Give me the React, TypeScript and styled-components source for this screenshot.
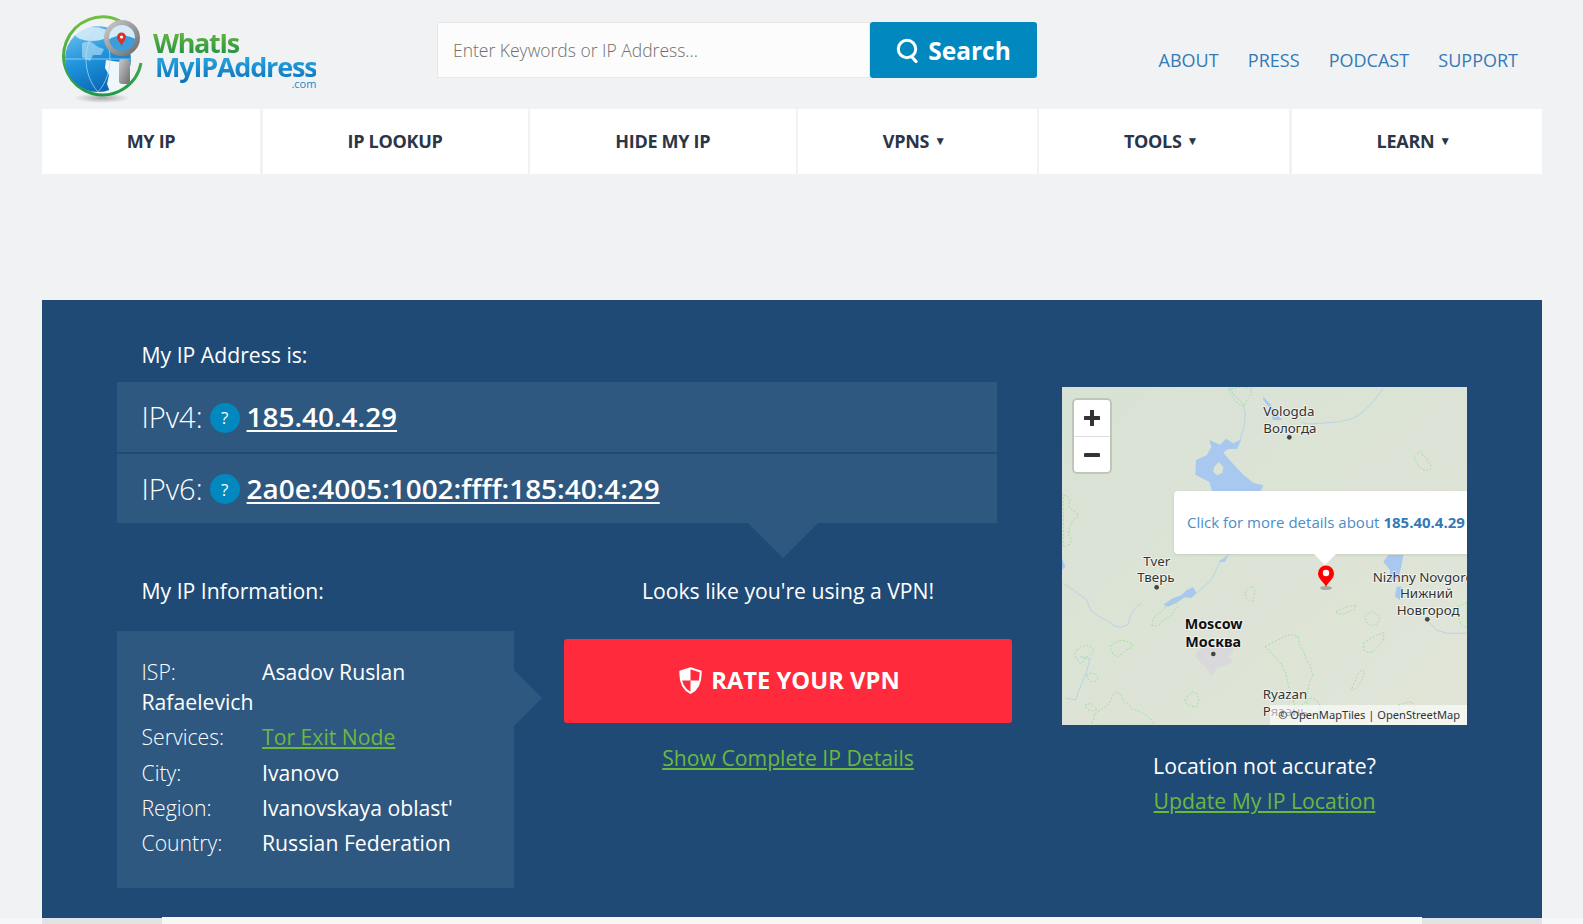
import styled, { createGlobalStyle } from "styled-components";

const GlobalStyle = createGlobalStyle`
  html, body {
    margin: 0;
    padding: 0;
    background: #f6f7f8;
    font-family: "Open Sans", "Noto Sans", sans-serif;
    overflow: hidden;
  }
  * { box-sizing: border-box; }
`;

const Page = styled.div`
  width: 1583px;
  height: 924px;
  overflow: hidden;
`;

const TopArea = styled.div`
  background: #f1f2f4;
  padding: 0 41px 0 42px;
`;

const Header = styled.header`
  display: flex;
  align-items: flex-start;
  height: 109px;
`;

const Logo = styled.a`
  display: flex;
  align-items: flex-start;
  width: 395px;
  padding-left: 16px;
  padding-top: 13px;
  text-decoration: none;
`;

const LogoText = styled.div`
  margin-left: -1px;
  padding-top: 17px;
  font-family: "Open Sans", sans-serif;
  font-weight: 700;
  display: flex;
  flex-direction: column;
`;

const LogoGreen = styled.span`
  margin-left: -2px;
  font-size: 27px;
  line-height: 26px;
  letter-spacing: -1.4px;
  background: linear-gradient(#6fb83f, #1f9145);
  -webkit-background-clip: text;
  background-clip: text;
  color: transparent;
`;

const LogoBlue = styled.span`
  font-size: 27px;
  line-height: 22px;
  letter-spacing: -1.2px;
  padding-bottom: 7px;
  margin-bottom: -6px;
  background: linear-gradient(#27a6e1, #0a6db6);
  -webkit-background-clip: text;
  background-clip: text;
  color: transparent;
`;

const LogoCom = styled.span`
  align-self: flex-end;
  font-size: 11px;
  font-weight: 400;
  line-height: 9px;
  color: #1784c8;
`;

const SearchForm = styled.form`
  display: flex;
  width: 600px;
  height: 56px;
  margin-top: 22px;
`;

const SearchInput = styled.input`
  flex: 1;
  min-width: 0;
  border: 1px solid #e8e8e8;
  background: #fcfcfc;
  padding: 0 15px;
  font-family: inherit;
  font-size: 17.5px;
  font-weight: 300;
  outline: none;
  &::placeholder {
    color: #6f6f6f;
    opacity: 1;
  }
`;

const SearchButton = styled.button`
  display: flex;
  align-items: center;
  justify-content: center;
  gap: 9px;
  width: 167px;
  border: 0;
  border-radius: 3px;
  background: #0088bf;
  color: #fff;
  font-family: inherit;
  font-size: 24.5px;
  font-weight: 700;
`;

const TopLinks = styled.nav`
  flex: 1;
  display: flex;
  justify-content: flex-end;
  gap: 29.2px;
  padding: 47px 24px 0 0;
`;

const TopLink = styled.a`
  font-size: 18px;
  line-height: 26px;
  color: #337ab7;
  text-decoration: none;
`;

const MainNav = styled.nav`
  display: flex;
  gap: 2.5px;
  height: 65px;
`;

const NavItem = styled.a<{ $w: number; $menu: boolean }>`
  flex: 0 0 ${(p) => p.$w}px;
  display: flex;
  align-items: center;
  justify-content: center;
  gap: 5px;
  padding: 0 ${(p) => (p.$menu ? 6 : 0)}px 2px 0;
  background: #fff;
  color: #2a3547;
  font-size: 18px;
  font-weight: 700;
  letter-spacing: -0.3px;
  text-decoration: none;
`;

const Caret = styled.span`
  font-size: 12px;
  line-height: 1;
`;

const AdSlot = styled.div`
  height: 126px;
`;

const Hero = styled.section`
  display: flex;
  gap: 50px;
  padding: 40px 75px 30px;
  background: #1f4a75;
  color: #fff;
`;

const LeftColumn = styled.div`
  width: 895px;
`;

const Heading = styled.h2`
  margin: 0;
  padding-left: 24.5px;
  font-size: 21.2px;
  font-weight: 400;
  line-height: 30px;
`;

const IpList = styled.div`
  position: relative;
  width: 880px;
  margin-top: 12px;
  display: flex;
  flex-direction: column;
  gap: 2px;

  &::after {
    content: "";
    position: absolute;
    left: 631px;
    top: 100%;
    border-left: 35px solid transparent;
    border-right: 35px solid transparent;
    border-top: 35px solid #2e5880;
  }
`;

const IpRow = styled.div`
  display: flex;
  align-items: center;
  height: 69.5px;
  padding-left: 24.5px;
  background: #2e5880;
  font-size: 29px;
  font-weight: 300;
`;

const HelpBadge = styled.span`
  display: flex;
  align-items: center;
  justify-content: center;
  width: 30px;
  height: 30px;
  margin: 2px 7px 0 7px;
  border-radius: 50%;
  background: #0088bf;
  font-size: 17px;
  font-weight: 400;
`;

const IpValue = styled.a`
  margin-bottom: 1px;
  color: #fff;
  font-size: 27.9px;
  font-weight: 650;
  text-decoration: underline;
  text-underline-offset: 3px;
`;

const InfoGrid = styled.div`
  display: flex;
  gap: 50px;
  margin-top: 53px;
`;

const InfoColumn = styled.div`
  width: 397px;
`;

const InfoPanel = styled.div`
  position: relative;
  margin-top: 25px;
  padding: 26px 24.5px 30px;
  background: #2e5880;
  font-size: 21.2px;
  line-height: 30px;

  &::after {
    content: "";
    position: absolute;
    left: 100%;
    top: 39px;
    border-top: 28.5px solid transparent;
    border-bottom: 28.5px solid transparent;
    border-left: 28px solid #2e5880;
  }
`;

const InfoRow = styled.div`
  margin-bottom: 5.3px;
  &:last-child {
    margin-bottom: 0;
  }
`;

const InfoLabel = styled.span`
  display: inline-block;
  width: 120.5px;
  font-weight: 300;
`;

const GreenLink = styled.a`
  color: #6cb83f;
  text-decoration: underline;
  text-underline-offset: 2px;
`;

const VpnColumn = styled.div`
  width: 448px;
  text-align: center;
`;

const CenterHeading = styled(Heading)`
  padding-left: 0;
`;

const RateButton = styled.a`
  display: flex;
  align-items: center;
  justify-content: center;
  gap: 9px;
  height: 84px;
  margin: 33px 0 20px;
  padding: 0 0 2px 3px;
  border-radius: 3px;
  background: #ff2b3c;
  color: #fff;
  font-size: 23.75px;
  font-weight: 700;
  text-decoration: none;
`;

const DetailsLink = styled(GreenLink)`
  font-size: 21.2px;
  line-height: 30px;
`;

const MapColumn = styled.div`
  width: 405px;
  margin-top: 47px;
  text-align: center;
`;

const MapFrame = styled.div`
  position: relative;
  height: 338px;
  overflow: hidden;
  background: #dde4d6;
`;

const MapDrawing = styled.svg`
  display: block;
`;

const ZoomControl = styled.div`
  position: absolute;
  left: 10px;
  top: 11px;
  width: 40px;
  border: 2px solid rgba(0, 0, 0, 0.12);
  border-radius: 5px;
  background: #fff;
  background-clip: padding-box;
`;

const ZoomButton = styled.div`
  display: flex;
  align-items: center;
  justify-content: center;
  height: 36px;
  & + & {
    border-top: 1px solid #ddd;
  }
`;

const Popup = styled.div`
  position: absolute;
  left: 112px;
  top: 104px;
  width: 320px;
  height: 63px;
  display: flex;
  align-items: center;
  padding: 0 0 2px 13px;
  border-radius: 4px;
  background: #fff;
  color: #4a8dc9;
  font-size: 15px;
  text-align: left;
  box-shadow: 0 1px 3px rgba(0, 0, 0, 0.1);

  &::after {
    content: "";
    position: absolute;
    left: 140px;
    top: 100%;
    border-left: 11px solid transparent;
    border-right: 11px solid transparent;
    border-top: 11px solid #fff;
  }

  b {
    color: #337ab7;
    margin-left: 4px;
    font-weight: 700;
  }
`;

const Marker = styled.svg`
  position: absolute;
  left: 255px;
  top: 178px;
`;

const Attribution = styled.div`
  position: absolute;
  right: 0;
  bottom: 0;
  width: 197px;
  height: 20px;
  padding-right: 7px;
  background: rgba(255, 255, 255, 0.6);
  color: #333;
  font-family: "Noto Sans", sans-serif;
  font-size: 11.1px;
  line-height: 20px;
  text-align: right;
  white-space: nowrap;
`;

const LocationText = styled.div`
  margin-top: 26px;
  font-size: 21.2px;
  line-height: 30px;
`;

const LocationLink = styled(GreenLink)`
  display: inline-block;
  margin-top: 5px;
  font-size: 21.2px;
  line-height: 30px;
`;

const BottomBand = styled.div`
  display: flex;
  height: 7px;
  margin: -1px 41px 0 42px;
`;

const BandSide = styled.div`
  width: 120px;
  margin-top: 1px;
  background: #e0e4e9;
`;

const BandCenter = styled.div`
  flex: 1;
  background: #f7f7f7;
`;

const navItems = [
  { label: "MY IP", w: 218 },
  { label: "IP LOOKUP", w: 265 },
  { label: "HIDE MY IP", w: 265.5 },
  { label: "VPNS", w: 238.5 },
  { label: "TOOLS", w: 250 },
  { label: "LEARN", w: 250.5 },
].map((item, i) => ({ ...item, menu: i > 2 }));

const forests = [
  "M40 345l12 5 8 12-4 15 8 12 16 8 4 14-16 10-6 14-4 12-4 16 10 14-4 16-20 8z",
  "M1095 230l8-10 10-6 6 14 12 6 4 14 8 6 0 12-12 6-12-4-10-6-8-12-8-10z",
  "M305 735l4-15 8-14 14-8 12-12 14-20 20 2 6 14-12 10-6 14-14 8-12 6-8 12-14 6z",
  "M585 640l8-12 14-10 8 15-3 16-2 14-12 0-10-10z",
  "M80 810l14-10 14-5 18 8 7 8-14 14-12 6-8 14-8 6-10-14-8-14z",
  "M180 800l16-12 18-8 14 4 20 8-6 12-14 6-12 12-14 8-14-8-4-12z",
  "M110 885l14-6 12 4 10 12-10 8-14 2-10-10z",
  "M105 975l16-4 12 8 8 10-14 4-14-4z",
  "M135 1000l24-14 20-16 8-20 12-15 14 10 8 22 14 6 12 14 22 8 22 12 16 14 8 15-190 0z",
  "M405 960l10-14 12-11 14 6 6 20-4 12-6 9-16-4-12-6z",
  "M645 800l30-16 30-16 20-4 20 6 2 20 14 24 8 24 12 20 8 30-10 16-6 30-8 20 2 12-16 12-14 6-10-30-10-30-8-40-14-30-16-20z",
  "M858 695l16-8 22-8 22-4-4 14-18 6-14 6-18 2z",
  "M945 710l10-10 12-6 18 12 4 12-8 14-14 6-12-6-8-10z",
  "M940 790l20-14 20-10 22-8-2 24-14 16-18 18-14 2-12-8z",
  "M905 925l10-20 10-25 12-10 8 4-8 24-10 16-12 14-8 2z",
  "M1225 680l14-8 12-6 0 78-14-6-10-20z",
  "M535 30l20-6 20-4 30 8 0 16-12 12-12 24-16-8-14-16z",
  "M1045 975l22-6 18-4 10 16 0 14-30 4-16-10z",
  "M770 960l16-6 14 6 10 16 0 14-16 6-20-6z",
];

const rivers = [
  "M1000 25l-30 40-30 30-30 20-40 10-60 5-35 2-20-6",
  "M570 180l12-40 4-40-8-30-30-30-8-18",
  "M40 610l30 20 40 30 12 30 22 18 30 16 20 14 20 4 20-8 8-30 18-24 14-10",
  "M440 640l44-40 24-50 32-30",
  "M1135 725l25 25 30 10 60 0",
  "M90 830l30 5-10 40-25 60-8 25-30-5",
];

const labels = [
  { x: 640, y: 108, text: "Vologda" },
  { x: 640, y: 158, text: "Вологда" },
  { x: 280, y: 557, text: "Tver" },
  { x: 262, y: 607, text: "Тверь" },
  { x: 968, y: 605, text: "Nizhny Novgorod" },
  { x: 1050, y: 655, text: "Нижний" },
  { x: 1040, y: 705, text: "Новгород" },
  { x: 638, y: 957, text: "Ryazan" },
  { x: 638, y: 1007, text: "Рязань" },
];

const cities = [
  [718, 172],
  [320, 622],
  [490, 822],
  [1132, 718],
];

// the base map is a picture, authored at 3x in the reference's crop coordinates
const MapPicture = () => (
  <MapDrawing width="405" height="338" viewBox="0 0 405 338">
    <defs>
      <linearGradient id="land" x1="0" y1="0" x2="1" y2="1">
        <stop offset="0" stopColor="#d8e2d4" />
        <stop offset="1" stopColor="#e0e5d8" />
      </linearGradient>
    </defs>
    <rect width="405" height="338" fill="url(#land)" />
    <g transform="translate(-12,-7) scale(0.3333)">
      <path
        d="M440 640l-10-18-20 8-14 14-30 12-26 18 14 6 30-14 20-14 20 2z"
        fill="#a8c8f0"
      />
      <path
        fillRule="evenodd"
        d="M438 240l32-14 14-24-6-22 32 14 18-18 22 14 24-12-12 28-30 2-12 10 26 30 34 36 30 24 30 8-10 24-142 0-10-34-42-22zM492 262l14-16 14 14-2 18-16 8-12-10z"
        fill="#a8c8f0"
      />
      <path d="M640 50l24 26 16 28 18 16-30 0-4-30-24-30z" fill="#a8c8f0" />
      <path d="M1000 545l15-20 45 0-5 30-10 40-25 5 0-30z" fill="#a8c8f0" />
      <path d="M36 535l10 25-10 10z" fill="#a8c8f0" />
      <path d="M1040 620l15 0-5 40-15-10z" fill="#a8c8f0" />
      <path d="M505 545l30-20-10 20z" fill="#a8c8f0" />
      <path
        d="M440 815l30-18 30-10 30 0 20 10 0 20-14 14 14 14-20 10-30 10-16 25-14-25-20-20-14-15z"
        fill="#d9d9dc"
      />
      {rivers.map((d) => (
        <path key={d} d={d} fill="none" stroke="#b3cfe8" strokeWidth="2.6" />
      ))}
      {forests.map((d) => (
        <path
          key={d}
          d={d}
          fill="none"
          stroke="#a2e09d"
          strokeWidth="3"
          strokeDasharray="6 5"
        />
      ))}
      {cities.map(([x, y]) => (
        <circle key={x} cx={x} cy={y} r="7" fill="#444" />
      ))}
      <g
        fontFamily="'Noto Sans', sans-serif"
        fontSize="40"
        fill="#333"
        stroke="rgba(255,255,255,0.55)"
        strokeWidth="6"
        paintOrder="stroke"
      >
        {labels.map((l) => (
          <text key={l.text} x={l.x} y={l.y}>
            {l.text}
          </text>
        ))}
        <text x="404" y="748" fontSize="43" fontWeight="700" fill="#111">
          Moscow
        </text>
        <text x="406" y="802" fontSize="43" fontWeight="700" fill="#111">
          Москва
        </text>
      </g>
    </g>
  </MapDrawing>
);

const ShieldIcon = () => (
  <svg width="23" height="27" viewBox="0 0 23 27">
    <path
      d="M11.5 1.2 L21.6 4.6 C22 14 19.5 22 11.5 25.8 C3.5 22 1 14 1.4 4.6 Z"
      fill="none"
      stroke="#fff"
      strokeWidth="2"
    />
    <path d="M11.5 1.2 L1.4 4.6 C1.3 8 1.6 11 2.4 13.5 H11.5 Z" fill="#fff" />
    <path d="M11.5 13.5 H20.6 C19 19 16 23.6 11.5 25.8 Z" fill="#fff" />
  </svg>
);

const SearchIcon = () => (
  <svg width="23" height="25" viewBox="0 0 23 25" fill="none" stroke="#fff">
    <circle cx="11" cy="11" r="8.7" strokeWidth="3" />
    <path d="M15.5 18.5 L20 23.5" strokeWidth="3.2" strokeLinecap="round" />
  </svg>
);

const LogoMark = () => (
  <svg width="98" height="95" viewBox="0 0 98 95">
    <defs>
      <linearGradient id="sea" x1="0.2" y1="0" x2="0.6" y2="1">
        <stop offset="0" stopColor="#6cc0ee" />
        <stop offset="0.5" stopColor="#1e93dc" />
        <stop offset="1" stopColor="#0a66b2" />
      </linearGradient>
      <linearGradient id="ring" x1="0" y1="0" x2="0" y2="1">
        <stop offset="0" stopColor="#72bf44" />
        <stop offset="1" stopColor="#1f9a48" />
      </linearGradient>
      <linearGradient id="steel" x1="0" y1="0" x2="1" y2="1">
        <stop offset="0" stopColor="#c9c9c9" />
        <stop offset="1" stopColor="#6e6e6e" />
      </linearGradient>
      <radialGradient id="drop">
        <stop offset="0" stopColor="#777" stopOpacity="0.6" />
        <stop offset="1" stopColor="#777" stopOpacity="0" />
      </radialGradient>
    </defs>
    <ellipse cx="44" cy="85" rx="28" ry="5" fill="url(#drop)" />
    <path
      d="M62 8 A39 39 0 1 0 83 50"
      fill="none"
      stroke="url(#ring)"
      strokeWidth="3"
    />
    <circle cx="40" cy="46" r="33" fill="url(#sea)" />
    <ellipse cx="34" cy="21" rx="17" ry="7" fill="#eef7fc" opacity="0.75" />
    <path
      d="M48 47l14 2 10 5-3 14-9 9-8 2-3-8 2-9-4-7z"
      fill="#eef7fc"
    />
    <path
      d="M24 30l8-2 8 6 6 2-3 6-8 0-3 6-8-4z"
      fill="#bfe3f7"
      opacity="0.6"
    />
    <path
      d="M7 46h66M40 13c-16 18-16 48 0 66M40 13c16 18 16 48 0 66"
      fill="none"
      stroke="#b8e0f5"
      strokeWidth="0.7"
    />
    <circle cx="64" cy="25" r="17" fill="#d4eaf7" />
    <path d="M50 27c8-6 20-6 29 0l-3 8-10 6-12-4z" fill="#3a9ddd" />
    <circle
      cx="64"
      cy="25"
      r="15.5"
      fill="none"
      stroke="url(#steel)"
      strokeWidth="5"
    />
    <rect x="61" y="46" width="11" height="25" rx="3" fill="url(#steel)" />
    <path
      d="M59 24a4.5 4.5 0 1 1 9 0c0 3-3 5-4.5 9-1.5-4-4.5-6-4.5-9z"
      fill="#d8352a"
    />
    <circle cx="63.5" cy="24" r="1.6" fill="#fff" />
  </svg>
);

export default function App() {
  return (
    <Page>
      <GlobalStyle />
      <TopArea>
        <Header>
          <Logo href="#">
            <LogoMark />
            <LogoText>
              <LogoGreen>WhatIs</LogoGreen>
              <LogoBlue>MyIPAddress</LogoBlue>
              <LogoCom>.com</LogoCom>
            </LogoText>
          </Logo>
          <SearchForm onSubmit={(e) => e.preventDefault()}>
            <SearchInput placeholder="Enter Keywords or IP Address..." />
            <SearchButton type="submit">
              <SearchIcon />
              Search
            </SearchButton>
          </SearchForm>
          <TopLinks>
            <TopLink href="#">ABOUT</TopLink>
            <TopLink href="#">PRESS</TopLink>
            <TopLink href="#">PODCAST</TopLink>
            <TopLink href="#">SUPPORT</TopLink>
          </TopLinks>
        </Header>
        <MainNav>
          {navItems.map((item) => (
            <NavItem key={item.label} href="#" $w={item.w} $menu={item.menu}>
              {item.label}
              {item.menu ? <Caret>▼</Caret> : null}
            </NavItem>
          ))}
        </MainNav>
        <AdSlot />
        <Hero>
          <LeftColumn>
            <Heading>My IP Address is:</Heading>
            <IpList>
              <IpRow>
                IPv4:
                <HelpBadge>?</HelpBadge>
                <IpValue href="#">185.40.4.29</IpValue>
              </IpRow>
              <IpRow>
                IPv6:
                <HelpBadge>?</HelpBadge>
                <IpValue href="#">2a0e:4005:1002:ffff:185:40:4:29</IpValue>
              </IpRow>
            </IpList>
            <InfoGrid>
              <InfoColumn>
                <Heading>My IP Information:</Heading>
                <InfoPanel>
                  <InfoRow>
                    <InfoLabel>ISP:</InfoLabel>Asadov Ruslan Rafaelevich
                  </InfoRow>
                  <InfoRow>
                    <InfoLabel>Services:</InfoLabel>
                    <GreenLink href="#">Tor Exit Node</GreenLink>
                  </InfoRow>
                  <InfoRow>
                    <InfoLabel>City:</InfoLabel>Ivanovo
                  </InfoRow>
                  <InfoRow>
                    <InfoLabel>Region:</InfoLabel>Ivanovskaya oblast'
                  </InfoRow>
                  <InfoRow>
                    <InfoLabel>Country:</InfoLabel>Russian Federation
                  </InfoRow>
                </InfoPanel>
              </InfoColumn>
              <VpnColumn>
                <CenterHeading>Looks like you're using a VPN!</CenterHeading>
                <RateButton href="#">
                  <ShieldIcon />
                  RATE YOUR VPN
                </RateButton>
                <DetailsLink href="#">Show Complete IP Details</DetailsLink>
              </VpnColumn>
            </InfoGrid>
          </LeftColumn>
          <MapColumn>
            <MapFrame>
              <MapPicture />
              <ZoomControl>
                <ZoomButton>
                  <svg width="16" height="16" viewBox="0 0 16 16">
                    <path d="M8 1v14M1 8h14" stroke="#333" strokeWidth="4" strokeLinecap="round" />
                  </svg>
                </ZoomButton>
                <ZoomButton>
                  <svg width="16" height="6" viewBox="0 0 16 6">
                    <path d="M1.5 3h13" stroke="#333" strokeWidth="4" strokeLinecap="round" />
                  </svg>
                </ZoomButton>
              </ZoomControl>
              <Popup>
                Click for more details about<b>185.40.4.29</b>
              </Popup>
              <Marker width="18" height="26" viewBox="0 0 18 26">
                <ellipse cx="9" cy="23" rx="6" ry="2" fill="rgba(0,0,0,0.25)" />
                <path
                  d="M9 .5a8 8 0 0 1 8 8c0 5-5 8-8 13-3-5-8-8-8-13a8 8 0 0 1 8-8z"
                  fill="#f00"
                />
                <circle cx="9" cy="8" r="3.2" fill="#fff" />
              </Marker>
              <Attribution>© OpenMapTiles | OpenStreetMap</Attribution>
            </MapFrame>
            <LocationText>Location not accurate?</LocationText>
            <LocationLink href="#">Update My IP Location</LocationLink>
          </MapColumn>
        </Hero>
      </TopArea>
      <BottomBand>
        <BandSide />
        <BandCenter />
        <BandSide />
      </BottomBand>
    </Page>
  );
}
